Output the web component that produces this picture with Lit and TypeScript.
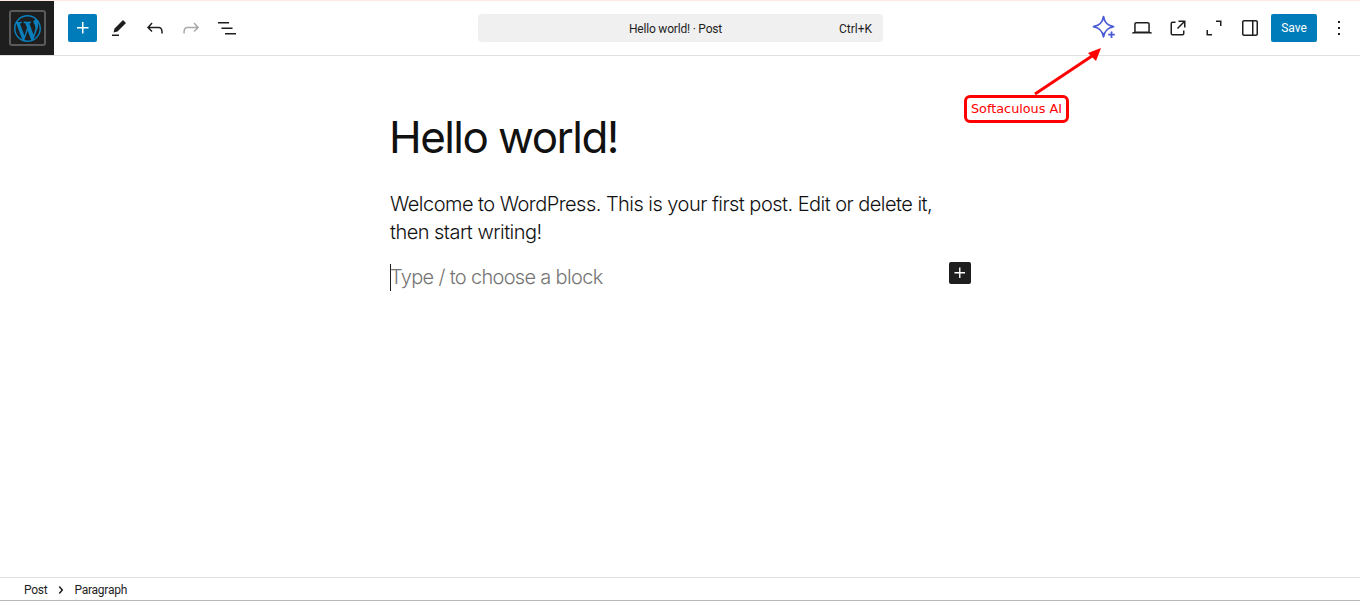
import { LitElement, html, css, svg } from "lit";
import { customElement } from "lit/decorators.js";

const icon = (d: unknown, cls = "") => html`<svg class="ic ${cls}" viewBox="0 0 24 24" width="24" height="24" fill="currentColor">${d}</svg>`;
const P = {
  plus: svg`<path d="M11 12.5V17.5H12.5V12.5H17.5V11H12.5V6H11V11H6V12.5H11Z"/>`,
  pen: svg`<path d="m19 7-3-3-8.5 8.5-1 4 4-1L19 7Zm-7 11.5H5V20h7v-1.5Z"/>`,
  undo: svg`<path d="M18.3 11.7c-.6-.6-1.4-.9-2.3-.9H6.7l2.9-3.3-1.1-1-4.5 5L8.5 16l1-1-2.7-2.7H16c.5 0 .9.2 1.3.5 1 1 1 3.4 1 4.5v.3h1.5v-.2c0-1.5 0-4.3-1.5-5.7z"/>`,
  redo: svg`<path d="M15.6 6.5l-1.1 1 2.9 3.3H8c-.9 0-1.7.3-2.3.9-1.4 1.5-1.4 4.2-1.4 5.6v.2h1.5v-.3c0-1.1 0-3.5 1-4.5.3-.3.7-.5 1.3-.5h9.2L14.5 15l1.1 1.1 4.6-4.6-4.6-5z"/>`,
  list: svg`<path d="M3 6h11v1.5H3V6Zm3.5 5.5h11V13h-11v-1.5ZM21 17H10v1.5h11V17Z"/>`,
  laptop: svg`<path d="M20.5 16h-.7V8c0-1.1-.9-2-2-2H6.2c-1.1 0-2 .9-2 2v8h-.7c-.8 0-1.5.7-1.5 1.5h20c0-.8-.7-1.5-1.5-1.5zM5.7 8c0-.3.2-.5.5-.5h11.6c.3 0 .5.2.5.5v7.6H5.7V8z"/>`,
  ext: svg`<path d="M19.5 4.5h-7V6h4.44l-5.97 5.97 1.06 1.06L18 7.06v4.44h1.5v-7Zm-13 1a2 2 0 0 0-2 2v10a2 2 0 0 0 2 2h10a2 2 0 0 0 2-2v-3H17v3a.5.5 0 0 1-.5.5h-10a.5.5 0 0 1-.5-.5v-10a.5.5 0 0 1 .5-.5h3V5.5h-3Z"/>`,
  full: svg`<path d="M6 14H4.5v5.5H10V18H6v-4Zm8-8h4v4h1.5V4.5H14V6Z"/>`,
  drawer: svg`<path d="M18 4H6c-1.1 0-2 .9-2 2v12c0 1.1.9 2 2 2h12c1.1 0 2-.9 2-2V6c0-1.1-.9-2-2-2zm-4 14.5H6c-.3 0-.5-.2-.5-.5V6c0-.3.2-.5.5-.5h8v13zm4.5-.5c0 .3-.2.5-.5.5h-2.5v-13H18c.3 0 .5.2.5.5v12z"/>`,
  more: svg`<path d="M13 19h-2v-2h2v2zm0-6h-2v-2h2v2zm0-6h-2V5h2v2z"/>`,
  chev: svg`<path d="M10.8622 8.04053L14.2805 12.0286L10.8622 16.0167L9.72327 15.0405L12.3049 12.0286L9.72327 9.01672L10.8622 8.04053Z"/>`,
};
const WP = "M20 10c0-5.51-4.49-10-10-10C4.48 0 0 4.49 0 10c0 5.52 4.48 10 10 10 5.51 0 10-4.48 10-10zM7.78 15.37L4.37 6.22c.55-.02 1.17-.08 1.17-.08.5-.06.44-1.13-.06-1.11 0 0-1.45.11-2.37.11-.18 0-.37 0-.58-.01C4.12 2.69 6.87 1.11 10 1.11c2.33 0 4.45.87 6.05 2.34-.68-.11-1.65.39-1.65 1.58 0 .74.45 1.36.9 2.1.35.61.55 1.36.55 2.46 0 1.49-1.4 5-1.4 5l-3.03-8.37c.54-.02.82-.17.82-.17.5-.05.44-1.25-.06-1.22 0 0-1.44.12-2.38.12-.87 0-2.33-.12-2.33-.12-.5-.03-.56 1.2-.06 1.22l.92.08 1.26 3.41zM17.41 10c.24-.64.74-1.87.43-4.25.7 1.29 1.05 2.71 1.05 4.25 0 3.29-1.73 6.24-4.4 7.78.97-2.59 1.94-5.2 2.92-7.78zM6.1 18.09C3.12 16.65 1.11 13.53 1.11 10c0-1.3.23-2.48.72-3.59C3.25 10.3 4.67 14.2 6.1 18.09zm4.03-6.63l2.58 6.98c-.86.29-1.76.45-2.71.45-.79 0-1.57-.11-2.29-.33.81-2.38 1.62-4.74 2.42-7.1z";

@customElement("app-root")
export class AppRoot extends LitElement {
  static styles = css`
    :host { display: flex; flex-direction: column; height: 602px; overflow: hidden; position: relative; background: #fff; color: #1e1e1e; font-family: Roboto, "Open Sans", sans-serif; }
    .strip { height: 1px; background: #fbe9e3; flex: none; }
    header { height: 54px; flex: none; display: flex; align-items: center; border-bottom: 1px solid #e0e0e0; position: relative; }
    .logo { width: 54px; height: 54px; background: #1e1e1e; display: flex; align-items: center; justify-content: center; flex: none; }
    .logo div { width: 37px; height: 36px; box-sizing: border-box; border: 2px solid #5a5a5a; border-radius: 3px; display: flex; align-items: center; justify-content: center; }
    .logo svg { width: 27px; height: 27px; fill: #0a7fbc; display: block; }
    .left { display: flex; align-items: center; margin-left: 14px; }
    .add { width: 29px; height: 28px; background: #007cba; color: #fff; border-radius: 2px; display: flex; align-items: center; justify-content: center; margin-right: 4px; }
    .tool { width: 36px; height: 28px; display: flex; align-items: center; justify-content: center; flex: none; }
    .dim { color: #a9a9a9; }
    .ic { display: block; }
    .center { position: absolute; left: 478px; top: 13px; width: 405px; height: 28px; box-sizing: border-box; padding-top: 1px; background: #f0f0f0; border-radius: 4px; display: flex; align-items: center; justify-content: center; font-size: 12px; }
    .center .t { margin-left: -10px; letter-spacing: -0.2px; }
    .center .k { position: absolute; right: 11px; }
    .right { margin-left: auto; display: flex; align-items: center; padding-right: 3px; }
    .spark { width: 38px; margin-right: 2px; }
    .spark svg { margin-left: 4px; }
    .save { width: 46px; height: 28px; background: #007cba; color: #fff; border-radius: 2px; font-size: 12px; display: flex; align-items: center; justify-content: center; margin-left: 3px; margin-right: 4px; }
    main { flex: 1; min-height: 0; padding-left: 390px; font-family: Inter, sans-serif; }
    h1 { margin: 54px 0 0 -1px; font-weight: 400; font-size: 44px; line-height: 54px; letter-spacing: -1.55px; color: #111; }
    p { margin: 0; font-weight: 300; font-size: 20px; line-height: 28px; }
    .para { margin-top: 26px; letter-spacing: -0.53px; width: 560px; color: #111; }
    .hold { margin-top: 17px; height: 28px; display: flex; position: relative; width: 581px; color: #757575; letter-spacing: -0.68px; }
    .caret { width: 1px; height: 27px; background: #1e1e1e; flex: none; margin-top: 1px; margin-right: -1px; }
    .ins { position: absolute; right: 0; top: -1px; width: 22px; height: 22px; background: #1e1e1e; color: #fff; border-radius: 2px; display: flex; align-items: center; justify-content: center; }
    .ins svg { width: 22px; height: 22px; }
    footer { height: 20px; padding-top: 2px; flex: none; border-top: 1px solid #e0e0e0; border-bottom: 1px solid #b8b8b8; margin-bottom: 1px; display: flex; align-items: center; padding-left: 24px; font-size: 12px; letter-spacing: -0.25px; }
    footer svg { width: 24px; height: 24px; margin: 0 1px 0 2px; }
    .note { position: absolute; left: 964px; top: 95px; width: 105px; height: 28px; box-sizing: border-box; padding-bottom: 2px; border: 3px solid #f00; border-radius: 6px; background: #fff; color: #f00; font-family: "DejaVu Sans", sans-serif; font-size: 12.8px; display: flex; align-items: center; justify-content: center; white-space: nowrap; }
    .arrow { position: absolute; left: 1030px; top: 40px; width: 80px; height: 60px; }
  `;
  render() {
    return html`
      <div class="strip"></div>
      <header>
        <div class="logo"><div><svg viewBox="0 0 20 20"><path d="${WP}"/></svg></div></div>
        <div class="left">
          <div class="add">${icon(P.plus)}</div>
          <div class="tool">${icon(P.pen)}</div>
          <div class="tool">${icon(P.undo)}</div>
          <div class="tool dim">${icon(P.redo)}</div>
          <div class="tool">${icon(P.list)}</div>
        </div>
        <div class="center"><span class="t">Hello world! · Post</span><span class="k">Ctrl+K</span></div>
        <div class="right">
          <div class="tool spark">
            <svg width="26" height="26" viewBox="0 0 26 26" fill="none" stroke="#4a5ad6" stroke-width="1.7" stroke-linejoin="round">
              <path d="M11.500 1.500c1 6 3.500 8.800 10 10.200-6.500 1.400-9 4.200-10 10.200-1-6-3.500-8.800-10-10.200 6.500-1.400 9-4.200 10-10.200Z"/>
              <path d="M19.500 16.500v6.500M16.200 19.700h6.600" stroke-width="1.800"/>
            </svg>
          </div>
          <div class="tool">${icon(P.laptop)}</div>
          <div class="tool">${icon(P.ext)}</div>
          <div class="tool">${icon(P.full)}</div>
          <div class="tool">${icon(P.drawer)}</div>
          <div class="save">Save</div>
          <div class="tool">${icon(P.more)}</div>
        </div>
      </header>
      <main>
        <h1>Hello world!</h1>
        <p class="para">Welcome to WordPress. This is your first post. Edit or delete it, then start writing!</p>
        <div class="hold"><span class="caret"></span><p>Type / to choose a block</p><span class="ins">${icon(P.plus)}</span></div>
      </main>
      <footer><span>Post</span>${icon(P.chev)}<span>Paragraph</span></footer>
      <svg class="arrow" viewBox="0 0 80 60">
        <line x1="5" y1="54" x2="62" y2="16" stroke="#f00" stroke-width="3"/>
        <polygon points="71,8 58,13 66,21" fill="#f00"/>
      </svg>
      <div class="note">Softaculous AI</div>
    `;
  }
}
